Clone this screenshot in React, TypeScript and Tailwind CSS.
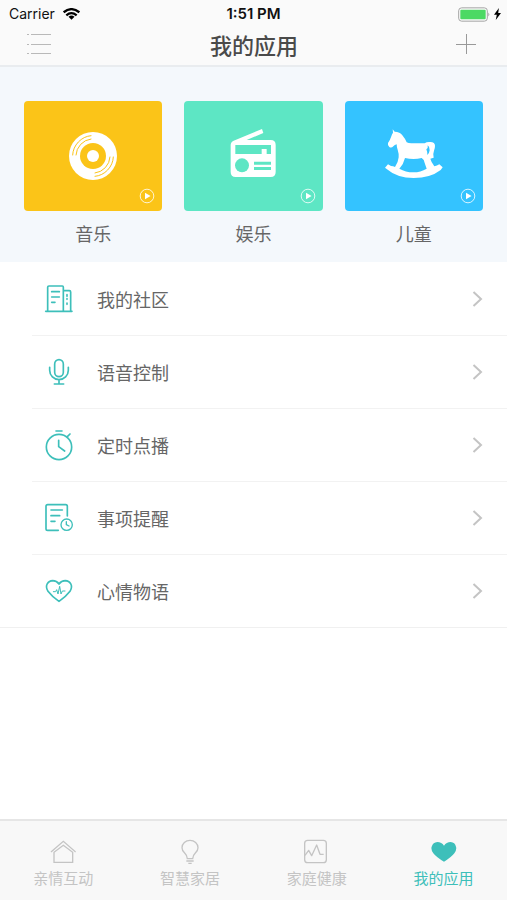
import React from "react";

const DiscIcon = () => (
  <svg viewBox="159 114 180 168" className="h-14 w-15" fill="none" stroke="#fbc418" strokeWidth="3" strokeLinecap="round">
    <circle cx="249" cy="198" r="72" fill="#fff" stroke="none" />
    <circle cx="249" cy="198" r="39" fill="#fbc418" stroke="none" />
    <circle cx="249" cy="198" r="18" fill="#fff" stroke="none" />
    <path d="M188 195a61 61 0 0 1 55-58M198 195a51 51 0 0 1 45-48" />
    <path d="M310 201a61 61 0 0 1-55 58M300 201a51 51 0 0 1-45 48" />
  </svg>
);

const RadioIcon = () => (
  <svg viewBox="147 114 180 168" className="h-14 w-15" fill="#fff">
    <path d="M264 117l4 12-50 21h72q15 0 15 15v81q0 15-15 15H185q-15 0-15-15v-81q0-9 9-13z" />
    <path d="M184 165h107v27h-13v-15h-15v15h-79z" fill="#5de6c4" />
    <circle cx="204" cy="226" r="21" fill="#5de6c4" />
    <path d="M240 215h51v9h-51zM240 231h51v9h-51z" fill="#5de6c4" />
  </svg>
);

const HorseIcon = () => (
  <svg viewBox="6 9 180 168" className="h-14 w-15" fill="#fff">
    <path d="M32 13L38 20Q54 20 61 31 70 42 74 52 79 55 88 55H128Q134 50 145 51 159 52 159 62 159 70 156 77 152 87 155 98L145 101Q147 110 157 124 165 122 172 118L182 127 176 135Q145 159 95 159 45 159 15 133L9 128 18 118 27 123Q34 123 39 126 49 111 50 97 51 86 47 74 44 67 44 58 38 60 34 64 28 70 22 66 16 61 18 54 25 44 28 34 30 27 33 23Z" />
    <path d="M69 99Q95 105 119 99 127 103 128 114L134 131Q116 142 94 142 71 142 52 131 65 117 69 99Z" fill="#34c3ff" />
    <path d="M137 61Q144 66 143 76 142 85 136 90 137 82 133 73L137 69Z" fill="#34c3ff" />
  </svg>
);

const CommunityIcon = () => (
  <svg viewBox="72 57 90 90" className="h-[30px] w-[30px]" fill="none" stroke="currentColor" strokeWidth="5" strokeLinecap="round" strokeLinejoin="round">
    <path d="M77 139h79M83 138V67q0-4 4-4h40q3 0 3 4v71M130 77h18q4 0 4 4v57" />
    <path d="M95 80h23M95 96h23M95 112h10M141 89v5M141 101v2M141 114v4" />
  </svg>
);

const MicIcon = () => (
  <svg viewBox="72 276 90 90" className="h-[30px] w-[30px]" fill="none" stroke="currentColor" strokeWidth="5" strokeLinecap="round">
    <rect x="104" y="284" width="26" height="51" rx="13" />
    <path d="M89 307v9a28 28 0 0 0 56 0v-9M117 346v11M103 357h28" />
  </svg>
);

const TimerIcon = () => (
  <svg viewBox="72 61 90 93" className="h-[31px] w-[30px]" fill="none" stroke="currentColor" strokeWidth="5" strokeLinecap="round">
    <circle cx="117" cy="112" r="38" />
    <path d="M108 64h18M142 81l8-8M116 92v19l18 13" />
  </svg>
);

const ReminderIcon = () => (
  <svg viewBox="72 282 90 90" className="h-[30px] w-[30px]" fill="none" stroke="currentColor" strokeWidth="5" strokeLinecap="round" strokeLinejoin="round">
    <path d="M115 364H83q-5 0-5-5v-67q0-5 5-5h54q5 0 5 5v29M93 303h34M93 320h26M93 337h12" />
    <circle cx="140" cy="347" r="17" strokeWidth="4" />
    <path d="M139 338v9l8 4" strokeWidth="4" />
  </svg>
);

const MoodIcon = () => (
  <svg viewBox="72 81 90 90" className="h-[30px] w-[30px]" fill="none" stroke="currentColor" strokeWidth="5" strokeLinecap="round" strokeLinejoin="round">
    <path d="M117 157Q95 142 84 127 76 114 82 104q5-8 16-9 12 0 19 10 7-10 19-10 11 1 16 9 6 10-2 23-11 15-33 30z" />
    <path d="M100 128h7l3-6 4 13 5-23 4 23 4-9h8" strokeWidth="3" />
  </svg>
);

const HomeTabIcon = () => (
  <svg viewBox="153 87 78 78" className="h-[26px] w-[26px]" fill="none" stroke="currentColor" strokeWidth="4">
    <path d="M156 126l37-32 37 32M165 157v-30l28-21 28 21v30z" />
  </svg>
);

const BulbTabIcon = () => (
  <svg viewBox="528 87 78 78" className="h-[26px] w-[26px]" fill="none" stroke="currentColor" strokeWidth="4">
    <path d="M559 146q0-9-8-17-8-8-8-16a24 22 0 0 1 48 0q0 8-8 16-8 8-8 17zM556 153h22M562 160h10" />
  </svg>
);

const HealthTabIcon = () => (
  <svg viewBox="150 87 78 78" className="h-[26px] w-[26px]" fill="none" stroke="currentColor" strokeWidth="4" strokeLinejoin="round">
    <rect x="152" y="91" width="65" height="67" rx="9" />
    <path d="M153 136l11-15 9 16 15-32 10 28h11" />
  </svg>
);

const HeartTabIcon = () => (
  <svg viewBox="530 87 78 78" className="h-[26px] w-[26px]" fill="currentColor">
    <path d="M569 155Q547 143 537 130q-8-11-5-20 4-13 17-14 13 0 20 11 7-11 20-11 13 1 16 14 3 9-5 20-10 13-31 25z" />
  </svg>
);

const PlayBadge = () => (
  <svg viewBox="0 0 16 16" className="absolute right-[7px] bottom-[7px] h-4 w-4" fill="none" stroke="#fff">
    <circle cx="8" cy="8" r="6.8" strokeOpacity="0.8" />
    <path d="M6 4.800v6.400l5.600-3.200z" fill="#fff" stroke="none" />
  </svg>
);

const categories = [
  { name: "音乐", color: "bg-[#fbc418]", Icon: DiscIcon },
  { name: "娱乐", color: "bg-[#5de6c4]", Icon: RadioIcon },
  { name: "儿童", color: "bg-[#34c3ff]", Icon: HorseIcon },
];

const menuItems = [
  { name: "我的社区", Icon: CommunityIcon },
  { name: "语音控制", Icon: MicIcon },
  { name: "定时点播", Icon: TimerIcon },
  { name: "事项提醒", Icon: ReminderIcon },
  { name: "心情物语", Icon: MoodIcon },
];

const tabs = [
  { name: "亲情互动", Icon: HomeTabIcon, active: false },
  { name: "智慧家居", Icon: BulbTabIcon, active: false },
  { name: "家庭健康", Icon: HealthTabIcon, active: false },
  { name: "我的应用", Icon: HeartTabIcon, active: true },
];

function StatusBar() {
  return (
    <div className="grid h-7 grid-cols-3 items-center px-[6px] font-['Inter','Liberation_Sans',sans-serif] text-sm text-[#111]">
      <div className="flex items-center gap-2 pl-[3px]">
        <span>Carrier</span>
        <svg viewBox="0 0 51 36" className="h-3 w-[17px]" fill="none" stroke="#000" strokeWidth="7">
          <path d="M2 13q23-19 47 0M10 22q15-13 31 0" />
          <path d="M25.500 35l-9-9q9-7 18 0z" fill="#000" stroke="none" />
        </svg>
      </div>
      <span className="text-center text-[15px] font-semibold">1:51 PM</span>
      <div className="flex items-center justify-end gap-1">
        <svg viewBox="0 0 96 44" className="h-[15px] w-8" fill="none">
          <rect x="2" y="2" width="86" height="40" rx="9" stroke="#a5a5a5" strokeWidth="3" />
          <rect x="7" y="8" width="76" height="28" rx="3" fill="#4cd964" />
          <path d="M91 16q6 6 0 12z" fill="#a5a5a5" />
        </svg>
        <svg viewBox="0 0 20 34" className="h-3 w-[7px]" fill="#000">
          <path d="M14 0L0 19h8L5 34l15-20h-8z" />
        </svg>
      </div>
    </div>
  );
}

export default function App() {
  return (
    <div className="flex min-h-screen flex-col bg-white font-['Noto_Sans_CJK_SC',sans-serif] text-[#666]">
      <header className="border-b-2 border-[#e9ecef] bg-[#fafafa]">
        <StatusBar />
        <div className="flex h-[37px] items-center justify-between pr-[31px] pb-[6px] pl-[26px]">
          <button type="button" aria-label="菜单">
            <svg viewBox="0 0 26 24" className="h-6 w-[26px]" stroke="#b9b9b9">
              <path d="M1 2.500h2M5 2.500h20M1 12.500h2M5 12.500h20M1 21.500h2M5 21.500h20" />
            </svg>
          </button>
          <h1 className="text-[22px] leading-8 font-medium text-[#4a4a4a]">我的应用</h1>
          <button type="button" aria-label="添加">
            <svg viewBox="0 0 20 20" className="h-5 w-5" stroke="#999">
              <path d="M0 10.500h20M10.500 0v20" />
            </svg>
          </button>
        </div>
      </header>

      <main className="flex-1">
        <section className="grid grid-cols-3 gap-[22px] bg-[#f4f8fc] px-6 pt-[34px] pb-[14px]">
          {categories.map(({ name, color, Icon }) => (
            <button key={name} type="button" className="flex flex-col items-center gap-2">
              <span className={`relative flex h-[110px] w-full items-center justify-center rounded ${color}`}>
                <Icon />
                <PlayBadge />
              </span>
              <span className="text-lg leading-[29px]">{name}</span>
            </button>
          ))}
        </section>

        <nav className="border-b border-[#f0f0f0] pt-px">
          <ul className="ml-8 divide-y divide-[#f2f2f2]">
            {menuItems.map(({ name, Icon }) => (
              <li key={name}>
                <a href="#" className="flex h-[72px] items-center pr-6 pl-3">
                  <span className="text-[#3dbfba]">
                    <Icon />
                  </span>
                  <span className="ml-[23px] flex-1 pb-px text-lg">{name}</span>
                  <svg viewBox="0 0 11 18" className="h-[18px] w-[11px]" fill="none" stroke="#c4c4c4" strokeWidth="2">
                    <path d="M1.500 2l7.500 7-7.500 7" />
                  </svg>
                </a>
              </li>
            ))}
          </ul>
        </nav>
      </main>

      <nav className="grid grid-cols-4 border-t-2 border-[#e6e6e6] bg-[#f8f8f8] pt-[18px] pb-[11px]">
        {tabs.map(({ name, Icon, active }) => (
          <a
            key={name}
            href="#"
            aria-current={active ? "page" : undefined}
            className={`flex flex-col items-center gap-[2px] ${active ? "text-[#3dbfba]" : "text-[#c4c4c4]"}`}
          >
            <Icon />
            <span className="text-[15px] leading-[22px]">{name}</span>
          </a>
        ))}
      </nav>
    </div>
  );
}
